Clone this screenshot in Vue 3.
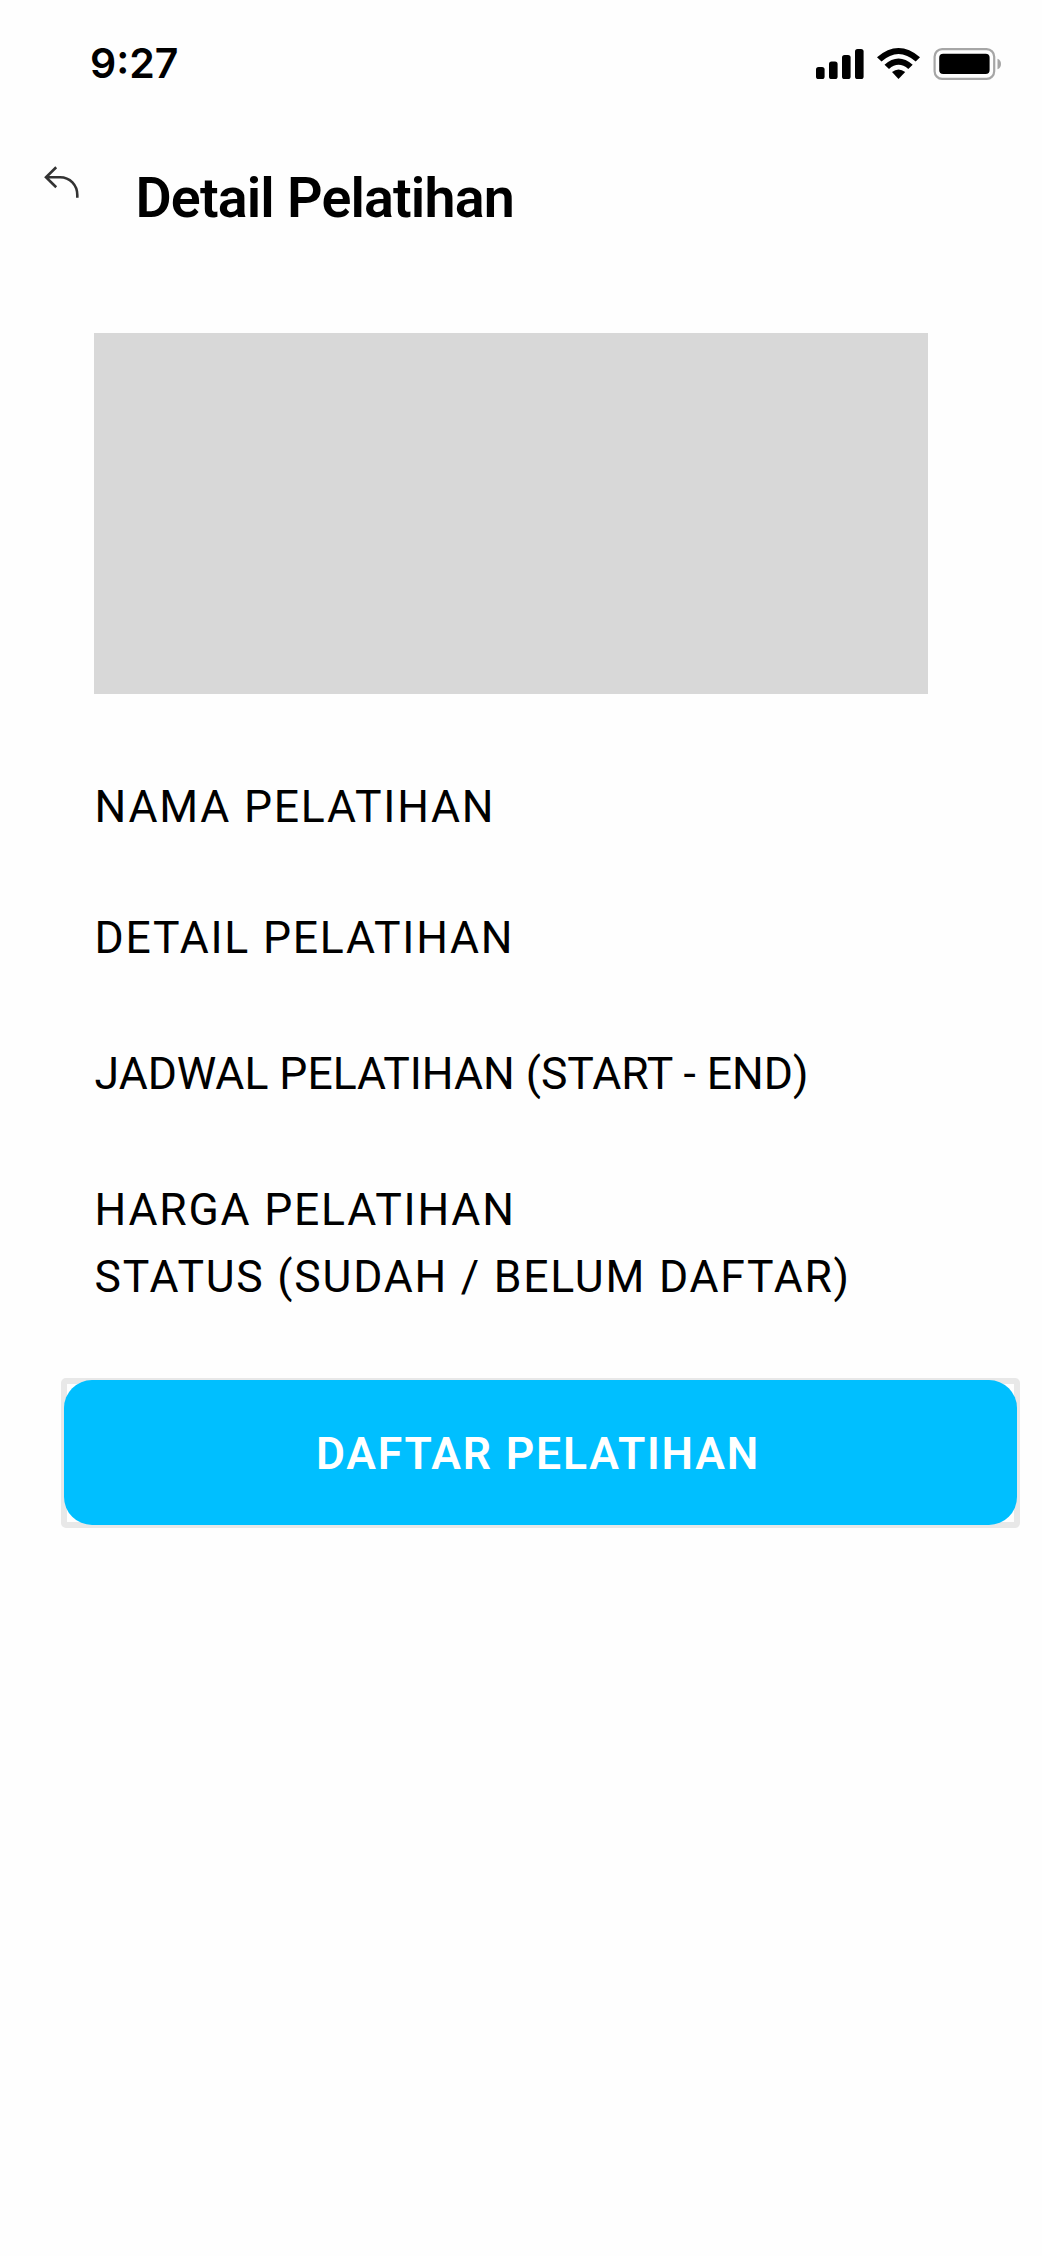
<script setup>
const details = [
  { name: 'nama', text: 'NAMA PELATIHAN' },
  { name: 'detail', text: 'DETAIL PELATIHAN' },
  { name: 'jadwal', text: 'JADWAL PELATIHAN (START - END)' },
  { name: 'harga', text: 'HARGA PELATIHAN' },
  { name: 'status', text: 'STATUS (SUDAH / BELUM DAFTAR)' },
]
</script>

<template>
  <main class="screen">
    <div class="status-bar">
      <span class="time">9:27</span>
      <svg class="indicators" width="190" height="36" viewBox="0 0 190 36">
        <rect x="0" y="19" width="8.6" height="12" rx="2.6" />
        <rect x="13" y="13.5" width="8.6" height="17.5" rx="2.6" />
        <rect x="26" y="7" width="8.6" height="24" rx="2.6" />
        <rect x="39" y="1" width="8.6" height="30" rx="2.6" />
        <path d="M61 9.2Q82.500 -9.200 104 9.200L99.700 13.600Q82.500 -1.400 65.500 13.600Z" />
        <path d="M68.500 16.700Q82.500 4.300 96.700 16.700L92.300 21Q82.500 12.700 73 21Z" />
        <path d="M76 24Q82.500 19 89.200 24L82.500 31Z" />
        <rect x="118.600" y="1.200" width="59.600" height="29.600" rx="7.500" fill="none" stroke="#a6a6a6" stroke-width="2.200" />
        <rect x="123.200" y="5.700" width="50.400" height="20.300" rx="4" />
        <path d="M181.500 10.800Q185 12 185 16T181.500 21.200Z" fill="#a6a6a6" />
      </svg>
    </div>
    <header class="header">
      <svg class="back" width="36" height="34" viewBox="0 0 36 34">
        <path d="M12.200 1.200L2 11.200L12.200 21.200M2.500 11.200H16C26 11.200 33.300 19 33.300 29V31.700" />
      </svg>
      <h1>Detail Pelatihan</h1>
    </header>
    <div class="banner"></div>
    <section class="details">
      <p v-for="item in details" :key="item.name" :class="item.name">{{ item.text }}</p>
    </section>
    <div class="action">
      <button type="button"><span>DAFTAR PELATIHAN</span></button>
    </div>
  </main>
</template>

<style>
body {
  margin: 0;
  background: #fefefe;
}
</style>

<style scoped>
.screen {
  box-sizing: border-box;
  width: 1042px;
  height: 2256px;
  overflow: hidden;
  background: #fefefe;
  color: #000;
  font-family: Roboto, sans-serif;
}
.status-bar {
  display: flex;
  justify-content: space-between;
  align-items: flex-start;
  height: 118px;
  padding: 39px 36px 0 90px;
  box-sizing: border-box;
}
.time {
  font: 600 41px/48px Inter, sans-serif;
}
.indicators {
  margin-top: 9px;
}
.header {
  display: flex;
  align-items: flex-start;
  height: 215px;
  padding-left: 44px;
}
.back {
  margin-top: 48px;
  fill: none;
  stroke: #333;
  stroke-width: 2.600;
}
h1 {
  margin: 44px 0 0 55.500px;
  font-size: 55.600px;
  font-weight: 600;
  line-height: 72px;
  letter-spacing: -0.850px;
  white-space: nowrap;
}
.banner {
  width: 833.400px;
  height: 361.300px;
  margin-left: 94.300px;
  background: #d8d8d8;
}
.details {
  display: flex;
  flex-direction: column;
  height: 683.700px;
  padding: 80px 0 0 94.600px;
  box-sizing: border-box;
}
p {
  margin: 0;
  font-size: 44.500px;
  line-height: 66px;
  letter-spacing: 1.770px;
  white-space: nowrap;
}
.detail {
  margin-top: 65px;
}
.jadwal {
  margin-top: 70px;
  letter-spacing: -0.020px;
}
.harga {
  margin-top: 70px;
}
.status {
  margin-top: 1px;
}
.action {
  box-sizing: border-box;
  width: 959px;
  height: 150px;
  margin-left: 61px;
  border: 6px solid #e8e8e8;
  border-radius: 5px;
}
button {
  display: block;
  width: 953px;
  height: 145px;
  margin: -4px 0 0 -3px;
  padding: 4px 5px 0 0;
  border: 0;
  border-radius: 28px;
  background: #00bfff;
  color: #fff;
  font: 600 44.500px/141px Roboto, sans-serif;
  letter-spacing: 1.770px;
}
</style>
